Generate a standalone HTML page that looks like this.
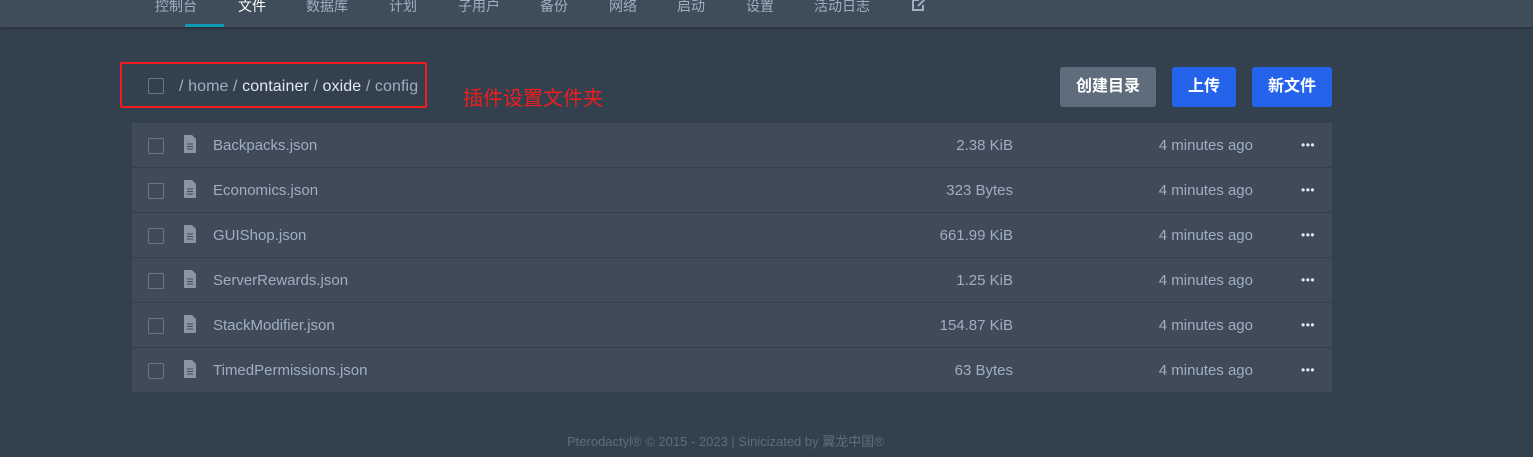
<!DOCTYPE html>
<html><head><meta charset="utf-8"><style>
*{margin:0;padding:0;box-sizing:border-box}
body{width:1533px;height:457px;background:#33404d;font-family:"Liberation Sans","Noto Sans CJK SC",sans-serif;position:relative;overflow:hidden;color:#cbd5e0}
.nav{position:absolute;left:0;top:0;width:1533px;height:27px;background:#3f4d5a;box-shadow:0 1px 3px rgba(0,0,0,.3)}
.nav span{position:absolute;top:-4px;font-size:14px;color:#a0aec0;line-height:20px}
.tabline{position:absolute;left:185px;top:24px;width:39px;height:3px;background:#0e9ab5}
.red{position:absolute;left:120px;top:62px;width:307px;height:46px;border:2px solid #f01d1d;border-radius:2px}
.cb{position:absolute;width:16px;height:16px;border:1px solid #6b7785;border-radius:2px}
.crumb{position:absolute;left:179px;top:78px;font-size:16px;color:#a0aec0;letter-spacing:0.1px}
.crumb b{font-weight:normal;color:#e2e8f0}
.note{position:absolute;left:463px;top:82px;font-size:20px;color:#f01d1d}
.btn{position:absolute;top:67px;height:40px;border-radius:3px;color:#fff;font-weight:bold;font-size:16px;text-align:center;line-height:40px}
.row{position:absolute;left:132px;width:1200px;height:44px;background:#3f4b59;font-size:15px;color:#a0aec0}
.row .name{position:absolute;left:81px;top:14px}
.row .size{position:absolute;right:319px;top:14px}
.row .time{position:absolute;right:79px;top:14px}
.row .dots{position:absolute;left:1169px;top:15px;font-size:12px;color:#e2e8f0;letter-spacing:0.5px}
.row .cb{left:16px;top:15px}
.row svg{position:absolute;left:51px;top:12px}
.foot{position:absolute;top:431px;left:567px;font-size:13px;color:#5f6c7b}
</style></head><body>
<div class="nav">
<span style="left:155px">控制台</span><span style="left:238px;color:#fff">文件</span><span style="left:306px">数据库</span><span style="left:389px">计划</span><span style="left:458px">子用户</span><span style="left:540px">备份</span><span style="left:609px">网络</span><span style="left:677px">启动</span><span style="left:746px">设置</span><span style="left:814px">活动日志</span>
<svg style="position:absolute;left:911px;top:-2px" width="16" height="14" viewBox="0 0 16 14"><path d="M2 2h6M2 2v10h10V7" stroke="#a0aec0" stroke-width="2" fill="none"/><path d="M7 8l7-7" stroke="#a0aec0" stroke-width="2"/></svg>
<div class="tabline"></div>
</div>
<div class="red"></div>
<div class="cb" style="left:148px;top:78px"></div>
<div class="crumb">/ home / <b>container</b> / <b>oxide</b> / config</div>
<div class="note">插件设置文件夹</div>
<div class="btn" style="left:1060px;width:96px;background:#5f6c7b">创建目录</div>
<div class="btn" style="left:1172px;width:64px;background:#2563eb">上传</div>
<div class="btn" style="left:1252px;width:80px;background:#2563eb">新文件</div>

<div class="row" style="top:123px"><div class="cb"></div><svg width="14" height="18" viewBox="0 0 14 18"><path d="M1 0h8l4 4v14H1z" fill="#8a95a3"/><path d="M4 9h6M4 11.5h6M4 14h6" stroke="#3f4b59" stroke-width="1"/></svg><span class="name">Backpacks.json</span><span class="size">2.38 KiB</span><span class="time">4 minutes ago</span><span class="dots">•••</span></div>
<div class="row" style="top:168px"><div class="cb"></div><svg width="14" height="18" viewBox="0 0 14 18"><path d="M1 0h8l4 4v14H1z" fill="#8a95a3"/><path d="M4 9h6M4 11.5h6M4 14h6" stroke="#3f4b59" stroke-width="1"/></svg><span class="name">Economics.json</span><span class="size">323 Bytes</span><span class="time">4 minutes ago</span><span class="dots">•••</span></div>
<div class="row" style="top:213px"><div class="cb"></div><svg width="14" height="18" viewBox="0 0 14 18"><path d="M1 0h8l4 4v14H1z" fill="#8a95a3"/><path d="M4 9h6M4 11.5h6M4 14h6" stroke="#3f4b59" stroke-width="1"/></svg><span class="name">GUIShop.json</span><span class="size">661.99 KiB</span><span class="time">4 minutes ago</span><span class="dots">•••</span></div>
<div class="row" style="top:258px"><div class="cb"></div><svg width="14" height="18" viewBox="0 0 14 18"><path d="M1 0h8l4 4v14H1z" fill="#8a95a3"/><path d="M4 9h6M4 11.5h6M4 14h6" stroke="#3f4b59" stroke-width="1"/></svg><span class="name">ServerRewards.json</span><span class="size">1.25 KiB</span><span class="time">4 minutes ago</span><span class="dots">•••</span></div>
<div class="row" style="top:303px"><div class="cb"></div><svg width="14" height="18" viewBox="0 0 14 18"><path d="M1 0h8l4 4v14H1z" fill="#8a95a3"/><path d="M4 9h6M4 11.5h6M4 14h6" stroke="#3f4b59" stroke-width="1"/></svg><span class="name">StackModifier.json</span><span class="size">154.87 KiB</span><span class="time">4 minutes ago</span><span class="dots">•••</span></div>
<div class="row" style="top:348px"><div class="cb"></div><svg width="14" height="18" viewBox="0 0 14 18"><path d="M1 0h8l4 4v14H1z" fill="#8a95a3"/><path d="M4 9h6M4 11.5h6M4 14h6" stroke="#3f4b59" stroke-width="1"/></svg><span class="name">TimedPermissions.json</span><span class="size">63 Bytes</span><span class="time">4 minutes ago</span><span class="dots">•••</span></div>

<div class="foot">Pterodactyl® © 2015 - 2023 | Sinicizated by 翼龙中国®</div>
</body></html>
